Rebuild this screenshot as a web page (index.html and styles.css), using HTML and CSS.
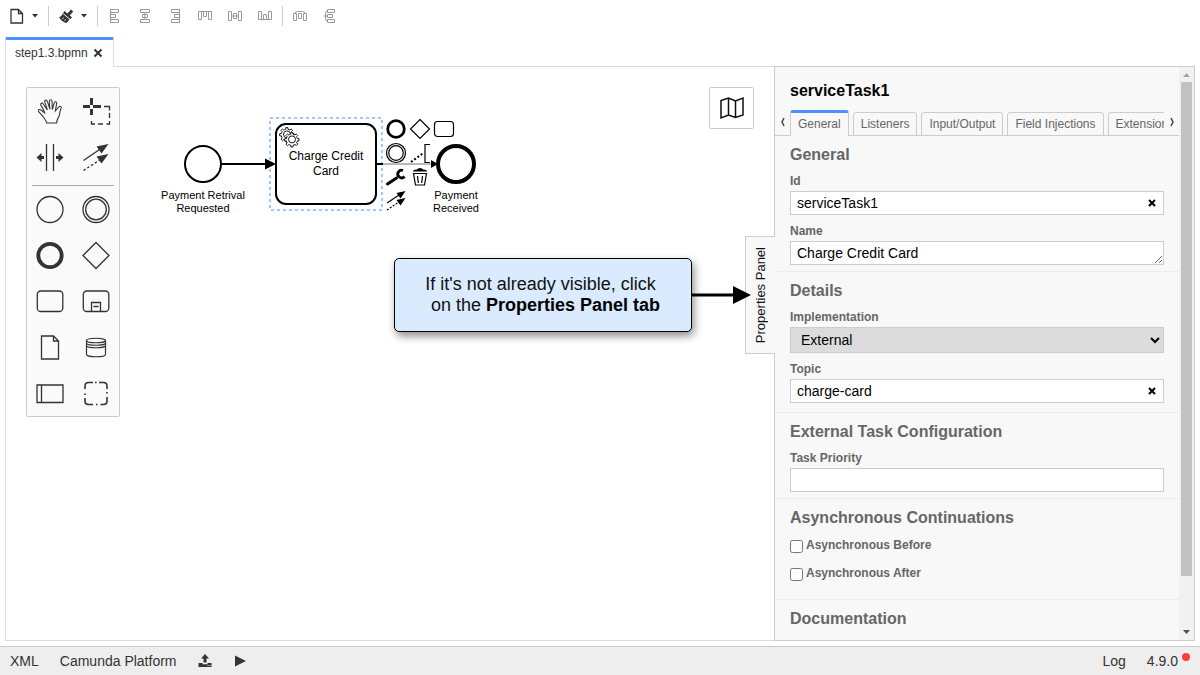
FILE: index.html
```html
<!DOCTYPE html>
<html lang="en">
<head>
<meta charset="utf-8">
<title>step1.3.bpmn - Modeler</title>
<link rel="stylesheet" href="styles.css">
</head>
<body>
<div class="app">
  <header class="toolbar">
    <div class="tool-group">
      <button class="tool-main" aria-label="New file"><svg width="24" height="24" viewBox="0 0 24 24"><path class="ink" d="M6 5.500h7.500l4 4v9.500h-11.500z M13.500 5.500v4h4"/></svg></button>
      <button class="tool-caret" aria-label="More file types"><svg width="12" height="24" viewBox="0 0 12 24"><path class="solid" d="M3 10h6l-3 3.500z"/></svg></button>
    </div>
    <span class="tool-sep"></span>
    <div class="tool-group tool-group-inset">
      <button class="tool-main" aria-label="Format"><svg width="24" height="24" viewBox="0 0 24 24"><path class="solid" d="M10.500 7l3 2.500 3.500-4 2.200 2-3.500 4 2.300 1.800-1.500 2-7.500-6.300z M8.500 9.500l7 6-3 3.500c-3-.5-6-3-7.500-6 2 0 3-1.500 3.500-3.500z"/><path d="M8 15l2-1.500M10.500 17l1.500-2" stroke="#fff" stroke-width=".7"/></svg></button>
      <button class="tool-caret" aria-label="Format options"><svg width="12" height="24" viewBox="0 0 12 24"><path class="solid" d="M3 10h6l-3 3.500z"/></svg></button>
    </div>
    <span class="tool-sep"></span>
    <button class="tool" aria-label="Align left"><svg width="16" height="16" viewBox="0 0 16 16"><path d="M3.500 1.500h8v3h-8z M3.500 6.500h5v3h-5z M3.500 11.500h8v3h-8z M3.500 1.500v13"/></svg></button>
    <button class="tool" aria-label="Align center"><svg width="16" height="16" viewBox="0 0 16 16"><path d="M3.500 1.500h9v3h-9z M5.500 6.500h5v3h-5z M3.500 11.500h9v3h-9z M8 4.500v7"/></svg></button>
    <button class="tool" aria-label="Align right"><svg width="16" height="16" viewBox="0 0 16 16"><path d="M4.500 1.500h8v3h-8z M7.500 6.500h5v3h-5z M4.500 11.500h8v3h-8z M12.500 1.500v13"/></svg></button>
    <button class="tool" aria-label="Align top"><svg width="16" height="16" viewBox="0 0 16 16"><path d="M1.500 3.500h3v8h-3z M6.500 3.500h3v5h-3z M11.500 3.500h3v8h-3z M1.500 3.500h13"/></svg></button>
    <button class="tool" aria-label="Align middle"><svg width="16" height="16" viewBox="0 0 16 16"><path d="M1.500 3.500h3v9h-3z M6.500 5.500h3v5h-3z M11.500 3.500h3v9h-3z M4.500 8h7"/></svg></button>
    <button class="tool" aria-label="Align bottom"><svg width="16" height="16" viewBox="0 0 16 16"><path d="M1.500 3.500h3v8h-3z M6.500 6.500h3v5h-3z M11.500 3.500h3v8h-3z M1.500 11.500h13"/></svg></button>
    <span class="tool-sep"></span>
    <button class="tool" aria-label="Distribute horizontally"><svg width="16" height="16" viewBox="0 0 16 16"><path d="M1.500 5.500h3v7h-3z M6.500 5.500h3v5h-3z M11.500 5.500h3v7h-3z M3 5.500q0-2 2.500-2h5q2.500 0 2.500 2"/></svg></button>
    <button class="tool" aria-label="Distribute vertically"><svg width="16" height="16" viewBox="0 0 16 16"><path d="M5.500 1.500h7v3h-7z M5.500 6.500h5v3h-5z M5.500 11.500h7v3h-7z M5.500 3q-2 0-2 2.500v5q0 2.500 2 2.500M2 8h3.500"/></svg></button>
  </header>

  <nav class="tabs">
    <div class="tab"><span>step1.3.bpmn</span><button class="tab-close" aria-label="Close tab"><svg width="10" height="10" viewBox="0 0 10 10"><path d="M1.500 1.500l7 7M8.500 1.500l-7 7"/></svg></button></div>
  </nav>

  <main class="editor">
    <section class="canvas">
      <svg class="diagram" width="100%" height="100%">
        <g transform="translate(-6 -67)">
          <circle class="shape" cx="203" cy="164" r="18"/>
          <text class="ext-label" x="203" y="199">Payment Retrival</text>
          <text class="ext-label" x="203" y="212">Requested</text>
          <rect class="selection" x="270" y="118" width="112" height="92"/>
          <rect class="shape" x="276" y="124" width="100" height="80" rx="10"/>
          <path class="shape" d="M221 164h46"/>
          <path d="M265 158.500l11 5.500-11 5.500z"/>
          <g class="gear">
            <g id="gear-a" transform="translate(276 124)">
              <path d="m 12,18 v -1.710 c .350,-.070 .700,-.180 1.050,-.320 .340,-.150 .660,-.320 .960,-.520 l 1.200,1.180 1.570,-1.580 -1.200,-1.180 c .400,-.610 .680,-1.300 .830,-2.020 l 1.620,-.010 v -2.220 l -1.640,.010 c -.070,-.350 -.180,-.700 -.320,-1.040 -.150,-.340 -.320,-.660 -.520,-.960 l 1.130,-1.140 -1.580,-1.560 -1.130,1.140 c -.610,-.400 -1.300,-.680 -2.020,-.820 l .010,-1.620 h -2.240 v 1.630 c -.350,.070 -.710,.180 -1.050,.320 -.340,.140 -.670,.320 -.960,.520 l -1.170,-1.160 -1.570,1.580 1.170,1.160 c -.400,.610 -.680,1.300 -.820,2.020 h -1.660 v 2.220 h 1.670 c .070,.350 .180,.700 .320,1.040 .150,.340 .320,.660 .520,.960 l -1.200,1.200 1.580,1.560 1.200,-1.190 c .610,.400 1.300,.680 2.020,.820 v 1.700 z"/>
              <circle cx="11" cy="10.400" r="3.500"/>
            </g>
            <use href="#gear-a" transform="translate(5 5)"/>
          </g>
          <text class="task-label" x="326" y="160">Charge Credit</text>
          <text class="task-label" x="326" y="175">Card</text>
          <path class="shape" d="M377 164h6"/>
          <path class="flow-dim" d="M383 164h48"/>
          <path d="M431 160l7 4-7 4z"/>
          <circle class="shape-end" cx="456" cy="164" r="18"/>
          <text class="ext-label" x="456" y="199">Payment</text>
          <text class="ext-label" x="456" y="212">Received</text>
        </g>
      </svg>

      <div class="palette">
        <button aria-label="Hand tool"><svg width="46" height="46" viewBox="21 24 138 138"><path class="ink3" d="M80 129C79 121 73 116 67 107L56 95C53 88 59 87 63 90L74 99C73 90 66 82 62 75C61 69 67 67 70 72L82 90C80 81 76 72 74 65C74 59 80 59 82 64L90 88C89 79 87 70 88 63C89 58 95 58 96 63L97 89L103 68C105 63 110 65 110 70L106 93L116 81C120 76 126 80 123 85C118 97 120 106 115 113C111 119 110 123 110 129Z"/></svg></button>
        <button aria-label="Lasso tool"><svg width="46" height="46" viewBox="0 0 46 46"><path d="M18.500 10v7M18.500 21v6M10 18.500h7M20 18.500h8" stroke="#333" stroke-width="3" fill="none"/><path class="ink" d="M31 18.500h5.500v4M36.500 25v5M36.500 33v3h-3M30 36h-5M22 36h-3.500v-3"/></svg></button>
        <button aria-label="Space tool"><svg width="46" height="46" viewBox="0 0 46 46"><path class="ink" d="M19.500 10v27M26.500 10v27"/><path class="solid" d="M9.500 23.500l5-4.500v3h2.500v3h-2.500v3z M36.500 23.500l-5-4.500v3h-2.500v3h2.500v3z"/></svg></button>
        <button aria-label="Connect tool"><svg width="46" height="46" viewBox="0 0 46 46"><path class="ink" d="M10.500 26.500l16-11"/><path class="ink" stroke-dasharray="2.500 2" d="M10.500 36.500l17-11"/><path class="solid" d="M35.500 10l-12 2.500 5 7z M35.500 20l-12 2.500 5 7z"/></svg></button>
        <span class="palette-sep"></span>
        <button aria-label="Start event"><svg width="46" height="46" viewBox="0 0 46 46"><circle class="ink" cx="23" cy="23.500" r="13"/></svg></button>
        <button aria-label="Intermediate event"><svg width="46" height="46" viewBox="0 0 46 46"><circle class="ink" cx="23" cy="23.500" r="13"/><circle class="ink" cx="23" cy="23.500" r="10.300"/></svg></button>
        <button aria-label="End event"><svg width="46" height="46" viewBox="0 0 46 46"><circle cx="23" cy="23.500" r="11.700" fill="none" stroke="#333" stroke-width="3.800"/></svg></button>
        <button aria-label="Gateway"><svg width="46" height="46" viewBox="0 0 46 46"><path class="ink" d="M23 10.500l13 13-13 13-13-13z"/></svg></button>
        <button aria-label="Task"><svg width="46" height="46" viewBox="0 0 46 46"><rect class="ink" x="10.300" y="13" width="25.500" height="20.500" rx="3.500"/></svg></button>
        <button aria-label="Sub process"><svg width="46" height="46" viewBox="0 0 46 46"><rect class="ink" x="10.300" y="13" width="25.500" height="20.500" rx="3.500"/><path class="ink" d="M18.500 33.500v-9h9v9M20.500 28.500h5"/></svg></button>
        <button aria-label="Data object"><svg width="46" height="46" viewBox="0 0 46 46"><path class="ink" d="M14.500 12h12l5 5v18h-17z M26.500 12v5h5"/></svg></button>
        <button aria-label="Data store"><svg width="46" height="46" viewBox="0 0 46 46"><path class="ink thin" d="M13.500 16.500c0-3 19-3 19 0v14c0 3-19 3-19 0z M13.500 16.500c0 3 19 3 19 0M13.500 19c0 3 19 3 19 0M13.500 21.500c0 3 19 3 19 0"/></svg></button>
        <button aria-label="Pool"><svg width="46" height="46" viewBox="0 0 46 46"><path class="ink" d="M10 15h26v17.500h-26z M14.500 15v17.500"/></svg></button>
        <button aria-label="Group"><svg width="46" height="46" viewBox="0 0 46 46"><path class="ink bold" d="M12 19v-3q0-3.500 3.500-3.500h4.500M22 12.500h1.500M26 12.500h4.500q3.500 0 3.500 3.500v3M34 22v1.500M34 27v4q0 3.500-3.500 3.500h-3M24.500 34.500h-1.500M20 34.500h-4.500q-3.500 0-3.500-3.500v-3M12 25v-1.500"/></svg></button>
      </div>

      <div class="context-pad">
        <button aria-label="Append end event"><svg width="24" height="24" viewBox="0 0 24 24"><circle cx="12" cy="12" r="8.300" fill="none" stroke="#000" stroke-width="2.800"/></svg></button>
        <button aria-label="Append gateway"><svg width="24" height="24" viewBox="0 0 24 24"><path class="pad-ink" d="M12 2.500l9.500 9.500-9.500 9.500-9.500-9.500z"/></svg></button>
        <button aria-label="Append task"><svg width="24" height="24" viewBox="0 0 24 24"><rect class="pad-ink" x="2.500" y="4.500" width="19" height="15" rx="3"/></svg></button>
        <button aria-label="Append intermediate event"><svg width="24" height="24" viewBox="0 0 24 24"><circle class="pad-ink" cx="12" cy="12" r="9.500"/><circle class="pad-ink" cx="12" cy="12" r="7.300"/></svg></button>
        <button aria-label="Append text annotation"><svg width="24" height="24" viewBox="0 0 24 24"><path class="pad-ink" d="M22 3.500h-5v18h5"/><path d="M3 21l13-9.500" fill="none" stroke="#000" stroke-width="2" stroke-dasharray="2 2"/></svg></button>
        <span></span>
        <button aria-label="Change type"><svg width="24" height="24" viewBox="0 0 24 24"><path d="M3.500 19l9-6" fill="none" stroke="#000" stroke-width="3" stroke-linecap="round"/><path d="M19 5.500a3.800 3.800 0 1 0 1.500 6" fill="none" stroke="#000" stroke-width="2.800"/></svg></button>
        <button aria-label="Remove"><svg width="24" height="24" viewBox="0 0 24 24"><path d="M5 6.500q0-2 4-2q.5-1.500 3-1.500t3 1.500q4 0 4 2z"/><path class="pad-ink" d="M5.500 8.500h13l-2 11.500h-9z M9.500 11l.8 7M14.500 11l-.8 7"/></svg></button>
        <span></span>
        <button aria-label="Connect"><svg width="24" height="24" viewBox="0 0 24 24"><path class="pad-ink" d="M3 14l12-8"/><path class="pad-ink" stroke-dasharray="2 1.500" d="M3 21l12-8"/><path d="M21.500 2l-9 2 4 5.500z M21.500 9l-9 2 4 5.500z"/></svg></button>
      </div>

      <button class="minimap" aria-label="Toggle minimap"><svg width="26" height="24" viewBox="0 0 26 24"><path d="M2 4.500l7.500-2.500 7 3 7.500-3v17l-7.500 2.500-7-2.500-7.500 3z M9.500 2v17M16.500 5v16.500"/></svg></button>
      <button class="panel-toggle"><span>Properties Panel</span></button>
      <p class="callout"><span>If it's not already visible, click </span><span> on the <strong>Properties Panel tab</strong></span><svg class="callout-arrow" width="60" height="20" viewBox="0 0 60 20"><path d="M0 8.500h42v-7.500l18 9-18 9v-7.500h-42z"/></svg></p>
    </section>

    <aside class="panel">
      <div class="panel-body">
        <h2 class="panel-title">serviceTask1</h2>
        <div class="panel-tabs">
          <button class="scroll-btn" aria-label="Scroll tabs left"><svg width="6" height="12" viewBox="0 0 6 12"><path d="M4 2l-2 4 2 4"/></svg></button>
          <div class="tab-list">
            <a class="ptab active" href="#general">General</a>
            <a class="ptab" href="#listeners">Listeners</a>
            <a class="ptab" href="#io">Input/Output</a>
            <a class="ptab" href="#fields">Field Injections</a>
            <a class="ptab" href="#ext">Extensions</a>
          </div>
          <button class="scroll-btn" aria-label="Scroll tabs right"><svg width="6" height="12" viewBox="0 0 6 12"><path d="M2 2l2 4-2 4"/></svg></button>
        </div>

        <section class="group" id="general">
          <h3>General</h3>
          <div class="field">
            <label for="f-id">Id</label>
            <div class="control"><input id="f-id" type="text" value="serviceTask1"><button class="clear" aria-label="Clear id"><svg width="8" height="8" viewBox="0 0 8 8"><path d="M1 1l6 6M7 1l-6 6"/></svg></button></div>
          </div>
          <div class="field">
            <label for="f-name">Name</label>
            <textarea id="f-name" rows="1">Charge Credit Card</textarea>
          </div>
        </section>

        <section class="group group-roomy">
          <h3>Details</h3>
          <div class="field">
            <label for="f-impl">Implementation</label>
            <select id="f-impl"><option>External</option></select>
          </div>
          <div class="field">
            <label for="f-topic">Topic</label>
            <div class="control"><input id="f-topic" type="text" value="charge-card"><button class="clear" aria-label="Clear topic"><svg width="8" height="8" viewBox="0 0 8 8"><path d="M1 1l6 6M7 1l-6 6"/></svg></button></div>
          </div>
        </section>

        <section class="group">
          <h3>External Task Configuration</h3>
          <div class="field">
            <label for="f-prio">Task Priority</label>
            <div class="control"><input id="f-prio" type="text"></div>
          </div>
        </section>

        <section class="group group-checks">
          <h3>Asynchronous Continuations</h3>
          <div class="check"><input id="f-before" type="checkbox"><label for="f-before">Asynchronous Before</label></div>
          <div class="check"><input id="f-after" type="checkbox"><label for="f-after">Asynchronous After</label></div>
        </section>

        <section class="group">
          <h3>Documentation</h3>
        </section>
      </div>
      <div class="scrollbar">
        <svg width="15" height="15" viewBox="0 0 15 15"><path fill="#a3a3a3" d="M4 10h7l-3.500-4z"/></svg>
        <div class="track"><div class="thumb"></div></div>
        <svg width="15" height="15" viewBox="0 0 15 15"><path fill="#505050" d="M4 5h7l-3.500 4z"/></svg>
      </div>
    </aside>
  </main>

  <footer class="status">
    <button>XML</button>
    <button>Camunda Platform</button>
    <button aria-label="Deploy"><svg width="14" height="14" viewBox="0 0 14 14"><path class="solid" d="M7 0l4 4.500h-2.500v4h-3v-4h-2.500z M.500 9h4v1.200h5v-1.200h4v4h-13z"/><path d="M9.500 11.500h1M11.500 11.500h1" stroke="#eee"/></svg></button>
    <button aria-label="Start instance"><svg width="14" height="14" viewBox="0 0 14 14"><path class="solid" d="M2 1.500l11 5.500-11 5.500z"/></svg></button>
    <span class="spacer"></span>
    <button>Log</button>
    <button class="version">4.9.0<i class="dot"></i></button>
  </footer>
</div>
</body>
</html>
```
FILE: styles.css
```css
* {
  box-sizing: border-box;
}

body {
  margin: 0;
  font: 14px "Liberation Sans", Arial, sans-serif;
  color: #333;
  background: #fff;
}

button {
  margin: 0;
  padding: 0;
  border: 0;
  background: none;
  font: inherit;
  color: inherit;
}

svg {
  display: block;
}

.ink,
.ink3 {
  fill: none;
  stroke: #333;
  stroke-width: 1.3;
}

.ink3 {
  stroke-width: 3.2;
}

.ink.thin {
  stroke-width: 1.2;
}

.ink.bold {
  stroke-width: 1.6;
}

.solid {
  fill: #333;
}

.app {
  display: flex;
  flex-direction: column;
  height: 100vh;
}

/* Toolbar */
.toolbar {
  display: flex;
  align-items: center;
  height: 32px;
  padding-left: 5px;
}

.tool-group {
  display: flex;
  padding-right: 5px;
}

.tool-group-inset {
  padding-left: 3px;
}

.tool-sep {
  width: 1px;
  height: 20px;
  margin: 0 2px;
  background: #ccc;
}

.tool {
  display: flex;
  justify-content: center;
  width: 30px;
}

.tool path {
  fill: none;
  stroke: #999;
}

/* File tabs */
.tabs {
  display: flex;
  padding: 5px 5px 0;
}

.tab {
  position: relative;
  z-index: 1;
  display: flex;
  align-items: center;
  gap: 5px;
  height: 30px;
  margin-bottom: -1px;
  padding: 2px 10px 0 9px;
  border: 1px solid #ddd;
  border-width: 0 1px;
  background: #fff;
  font-size: 12px;
}

.tab::before {
  content: "";
  position: absolute;
  inset: 0 0 auto;
  height: 3px;
  background: #4d90ff;
}

.tab-close path {
  stroke: #333;
  stroke-width: 2;
}

/* Editor */
.editor {
  display: flex;
  flex: 1;
  min-height: 0;
  margin: 0 5px 5px;
}

.canvas {
  position: relative;
  flex: 1;
  min-width: 0;
  border: 1px solid #ddd;
  border-right: 0;
}

.diagram {
  position: absolute;
  inset: 0;
}

.shape,
.shape-end {
  fill: #fff;
  stroke: #000;
  stroke-width: 2;
}

.shape-end {
  stroke-width: 4;
}

.flow-dim {
  stroke: #777;
}

.selection {
  fill: none;
  stroke: #a3c6ff;
  stroke-width: 2;
  stroke-dasharray: 3 3;
}

.gear {
  fill: #fff;
  stroke: #000;
  stroke-width: .9;
}

.ext-label,
.task-label {
  font-size: 11px;
  text-anchor: middle;
  fill: #000;
}

.task-label {
  font-size: 12px;
}

.palette {
  position: absolute;
  top: 20px;
  left: 20px;
  display: grid;
  grid-template-columns: 46px 46px;
  border: 1px solid #ccc;
  border-radius: 2px;
  background: #fafafa;
}

.palette-sep {
  grid-column: 1 / -1;
  height: 1px;
  margin: 5px 5px 0;
  background: #aaa;
}

.context-pad {
  position: absolute;
  top: 50px;
  left: 378px;
  display: grid;
  grid-template-columns: repeat(3, 24px);
  grid-auto-rows: 24px;
}

.pad-ink {
  fill: none;
  stroke: #000;
  stroke-width: 1.2;
}

.minimap {
  position: absolute;
  top: 20px;
  right: 20px;
  display: flex;
  align-items: center;
  justify-content: center;
  width: 45px;
  height: 42px;
  border: 1px solid #ccc;
  border-radius: 2px;
  background: #fff;
}

.minimap path {
  fill: none;
  stroke: #111;
  stroke-width: 1.5;
}

.panel-toggle {
  position: absolute;
  z-index: 2;
  top: 169px;
  right: -1px;
  width: 30px;
  height: 118px;
  padding-top: 3px;
  border: 1px solid #ccc;
  border-right: 0;
  background: #f8f8f8;
  font-size: 13px;
  color: #111;
}

.panel-toggle span {
  writing-mode: vertical-rl;
  transform: rotate(180deg);
  line-height: 28px;
}

.callout {
  position: absolute;
  z-index: 3;
  top: 191px;
  left: 388px;
  display: flex;
  flex-direction: column;
  align-items: center;
  justify-content: center;
  width: 298px;
  height: 74px;
  margin: 0;
  border: 1px solid #000;
  border-radius: 5px;
  background: #dbebff;
  box-shadow: 2px 4px 8px rgba(0, 0, 0, .45);
  font-size: 18px;
  line-height: 21px;
  white-space: pre;
  color: #111;
}

.callout strong {
  color: #000;
}

.callout-arrow {
  position: absolute;
  top: 26px;
  left: 100%;
}

/* Properties panel */
.panel {
  display: flex;
  width: 421px;
  border: 1px solid #ccc;
  background: #f8f8f8;
}

.panel-body {
  flex: 1;
  min-width: 0;
  overflow: hidden;
}

.panel-title {
  margin: 0;
  padding: 14px 15px 7px;
  font-size: 16px;
  line-height: 20px;
  color: #000;
}

.panel-tabs {
  display: flex;
  align-items: flex-end;
  box-shadow: inset 0 -1px #ccc;
}

.scroll-btn {
  display: flex;
  align-items: center;
  justify-content: center;
  width: 15px;
  height: 28px;
}

.scroll-btn path {
  fill: none;
  stroke: #444;
  stroke-width: 1.5;
}

.tab-list {
  display: flex;
  flex: 1;
  align-items: flex-end;
  gap: 4px;
  min-width: 0;
  overflow: hidden;
}

.ptab {
  flex: none;
  padding: 0 7px;
  border: 1px solid #ccc;
  border-radius: 3px 3px 0 0;
  font-size: 12px;
  line-height: 22px;
  color: #666;
  text-decoration: none;
}

.ptab.active {
  border-top: 3px solid #4d90ff;
  border-bottom: 0;
  background: #f8f8f8;
  line-height: 23px;
}

.group {
  padding: 9px 15px 6px;
  border-bottom: 1px solid #ececec;
}

.group:last-child {
  border-bottom: 0;
}

.group-roomy {
  padding-bottom: 9px;
}

.group-checks {
  padding-bottom: 11px;
}

.group h3 {
  margin: 0;
  font-size: 16px;
  line-height: 20px;
  color: #666;
}

.field {
  display: flex;
  flex-direction: column;
  gap: 2px;
  margin-top: 8px;
}

label {
  font-size: 12px;
  font-weight: bold;
  line-height: 16px;
  color: #666;
}

.control {
  position: relative;
  display: flex;
}

.control input,
textarea,
select {
  width: 100%;
  height: 24px;
  margin: 0;
  padding: 0 6px;
  border: 1px solid #ccc;
  border-radius: 0;
  background: #fff;
  font: 14px "Liberation Sans", Arial, sans-serif;
  color: #000;
}

textarea {
  line-height: 22px;
  overflow: hidden;
}

select {
  height: 26px;
  background: #dcdcdc;
}

.clear {
  position: absolute;
  top: 8px;
  right: 8px;
}

.clear path {
  stroke: #000;
  stroke-width: 2;
}

.check {
  display: flex;
  align-items: center;
  gap: 3px;
  height: 28px;
}

h3 + .check {
  margin-top: 4px;
}

.check input {
  width: 13px;
  height: 13px;
  margin: 1px 0 0;
}

.check label {
  padding-bottom: 2px;
}

.scrollbar {
  display: flex;
  flex-direction: column;
  width: 15px;
  background: #f1f1f1;
}

.track {
  flex: 1;
  padding: 0 2px;
}

.thumb {
  height: 91%;
  background: #c1c1c1;
}

/* Status bar */
.status {
  display: flex;
  align-items: center;
  gap: 21px;
  height: 29px;
  padding: 0 10px;
  border-top: 1px solid #ccc;
  background: #eee;
}

.spacer {
  flex: 1;
}

.version {
  display: flex;
  gap: 4px;
}

.dot {
  width: 8px;
  height: 8px;
  border-radius: 50%;
  background: #ff3b3b;
}
```
